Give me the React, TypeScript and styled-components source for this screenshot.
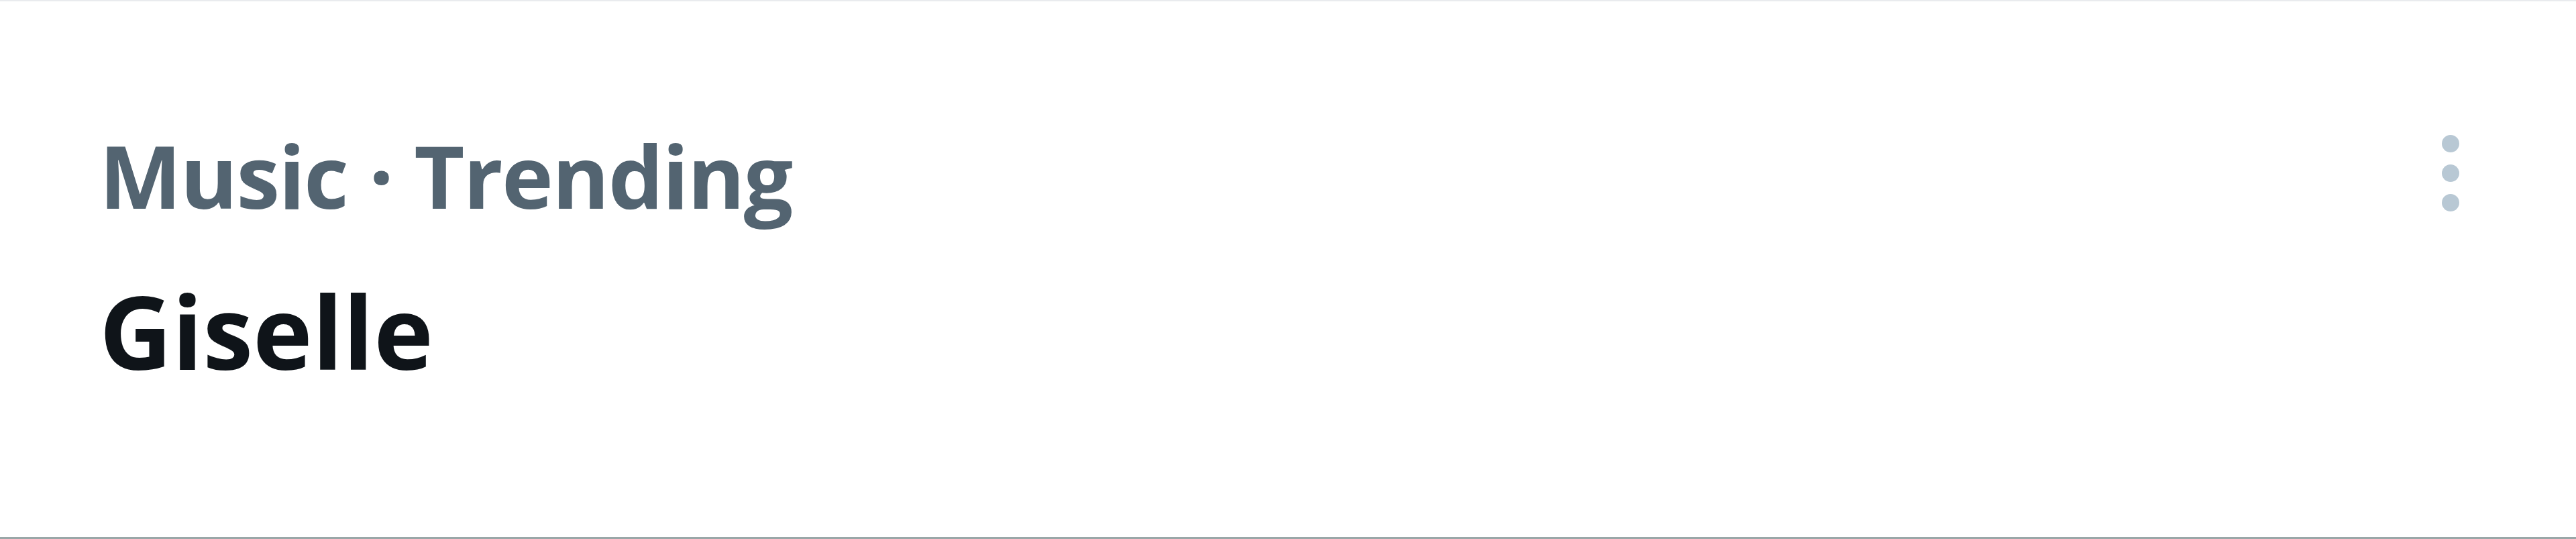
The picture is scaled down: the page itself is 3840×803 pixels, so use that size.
import React from "react";
import styled, { createGlobalStyle } from "styled-components";

const Global = createGlobalStyle`
  html, body {
    margin: 0;
    padding: 0;
    background: #ffffff;
  }
  body {
    font-family: "Open Sans", "Liberation Sans", sans-serif;
  }
`;

const Card = styled.section`
  box-sizing: border-box;
  width: 3840px;
  height: 803px;
  background: #ffffff;
  border-top: 2px solid #e9ebee;
  border-bottom: 3px solid #9aa7a8;
  padding: 179px 174px 0 148px;
  display: flex;
  flex-direction: column;
`;

const TopRow = styled.div`
  display: flex;
  align-items: center;
  justify-content: space-between;
`;

const Meta = styled.div`
  font-size: 130px;
  line-height: 160px;
  font-weight: 700;
  letter-spacing: -1.8px;
  color: #536471;
  white-space: nowrap;
`;

const Title = styled.div`
  margin-top: 52px;
  font-size: 150px;
  line-height: 200px;
  font-weight: 700;
  color: #0f1419;
  white-space: nowrap;
`;

const MoreButton = styled.button`
  border: 0;
  padding: 0;
  margin: 0 0 7px 0;
  background: transparent;
  display: flex;
  cursor: pointer;
`;

const MoreIcon = () => (
  <svg width="26" height="114" viewBox="0 0 26 114" aria-hidden="true">
    <circle cx="13" cy="13" r="13" fill="#b8c8d4" />
    <circle cx="13" cy="57" r="13" fill="#b8c8d4" />
    <circle cx="13" cy="101" r="13" fill="#b8c8d4" />
  </svg>
);

export default function App() {
  return (
    <>
      <Global />
      <Card>
        <TopRow>
          <Meta>Music · Trending</Meta>
          <MoreButton aria-label="More">
            <MoreIcon />
          </MoreButton>
        </TopRow>
        <Title>Giselle</Title>
      </Card>
    </>
  );
}
